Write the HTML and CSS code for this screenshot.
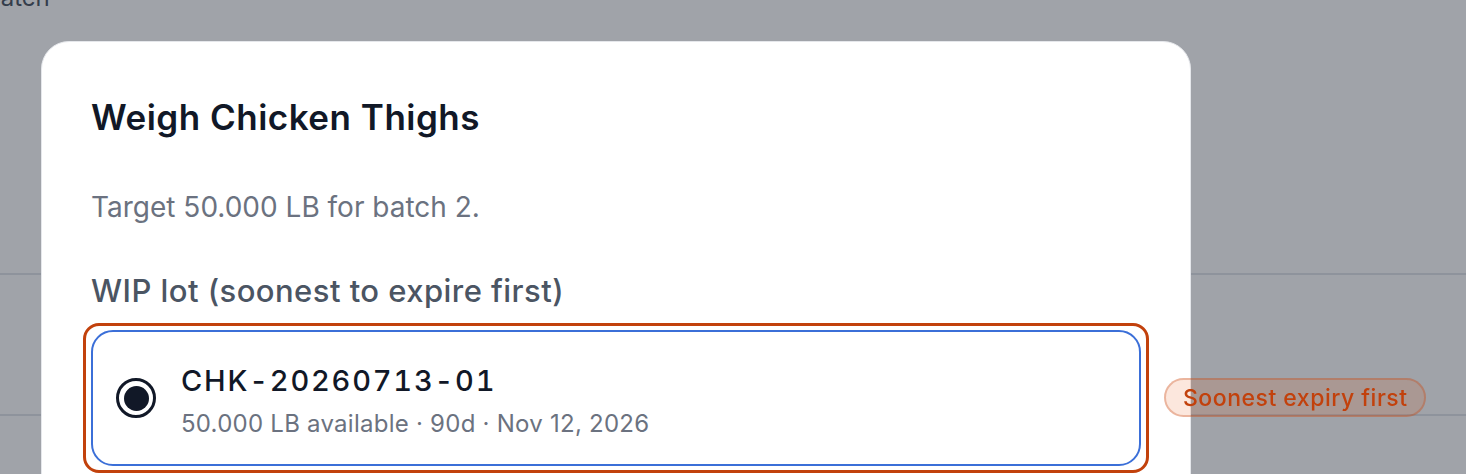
FILE: index.html
```html
<!DOCTYPE html>
<html>
<head>
<meta charset="utf-8">
<link rel="stylesheet" href="styles.css">
</head>
<body>
<div class="page">
  <div class="page-head">Batch</div>
  <div class="page-row r1"></div>
  <div class="page-row r2"></div>
</div>
<div class="overlay">
  <div class="modal">
    <h2 class="title">Weigh Chicken Thighs</h2>
    <p class="desc">Target 50.000 LB for batch 2.</p>
    <div class="label">WIP lot (soonest to expire first)</div>
    <div class="highlight">
      <div class="option">
        <span class="radio"><span class="dot"></span></span>
        <div class="option-text">
          <div class="lot">CHK-20260713-01</div>
          <div class="meta">50.000 LB available · 90d · Nov 12, 2026</div>
        </div>
      </div>
      <span class="badge">Soonest expiry first</span>
    </div>
  </div>
</div>
</body>
</html>
```

FILE: styles.css
```css
html, body {
  margin: 0;
  padding: 0;
  height: 100%;
  overflow: hidden;
}
body {
  background: #ffffff;
  font-family: Inter, "Noto Sans", sans-serif;
}
.page {
  position: relative;
  height: 100%;
}
.page-head {
  font-size: 24px;
  line-height: 24px;
  color: #4b5563;
  margin: -14px 0 0 -15px;
}
.page-row {
  border-bottom: 2px solid #e2e4e9;
}
.r1 { height: 263px; }
.r2 { height: 139px; }
.overlay {
  position: fixed;
  inset: 0;
  background: rgba(17, 24, 39, 0.4);
}
.modal {
  position: absolute;
  left: 41px;
  top: 41px;
  width: 1150px;
  height: 600px;
  background: #ffffff;
  border: 1px solid #e5e7eb;
  border-radius: 28px;
  box-sizing: border-box;
  padding: 53px 41px 0 41px;
}
.title {
  margin: 0;
  padding-left: 8px;
  font-size: 35px;
  line-height: 44px;
  font-weight: 600;
  letter-spacing: 0.5px;
  color: #111827;
}
.desc {
  margin: 50px 0 0 0;
  padding-left: 8px;
  font-size: 28px;
  line-height: 36px;
  color: #6b7280;
}
.label {
  margin-top: 46px;
  padding-left: 8px;
  font-size: 31px;
  line-height: 40px;
  font-weight: 500;
  letter-spacing: 0.45px;
  color: #4b5563;
}
.highlight {
  position: relative;
  margin-top: 12px;
  border: 3px solid #c2410c;
  border-radius: 16px;
  padding: 4px 5px;
}
.option {
  display: flex;
  align-items: center;
  gap: 25px;
  height: 136px;
  box-sizing: border-box;
  border: 2px solid #3b6fd8;
  border-radius: 22px;
  padding: 0 0 0 23px;
}
.radio {
  width: 40px;
  height: 40px;
  box-sizing: border-box;
  border: 3px solid #111827;
  border-radius: 50%;
  display: flex;
  align-items: center;
  justify-content: center;
  flex: none;
}
.dot {
  width: 25px;
  height: 25px;
  border-radius: 50%;
  background: #111827;
}
.option-text {
  display: flex;
  flex-direction: column;
  gap: 11px;
  margin-top: 6px;
}
.lot {
  font-size: 29px;
  line-height: 34px;
  font-weight: 500;
  color: #111827;
  font-variant-numeric: tabular-nums;
  letter-spacing: 1.8px;
}
.meta {
  font-size: 24px;
  line-height: 30px;
  letter-spacing: 0.25px;
  color: #6b7280;
}
.badge {
  position: absolute;
  left: calc(100% + 18px);
  top: 52px;
  height: 39px;
  box-sizing: border-box;
  padding: 0 16px 0 17px;
  display: flex;
  align-items: center;
  white-space: nowrap;
  border-radius: 20px;
  background: rgba(234, 88, 12, 0.14);
  border: 2px solid rgba(194, 65, 12, 0.3);
  color: #c2410c;
  font-size: 23px;
  font-weight: 500;
  letter-spacing: 0.5px;
}
```
